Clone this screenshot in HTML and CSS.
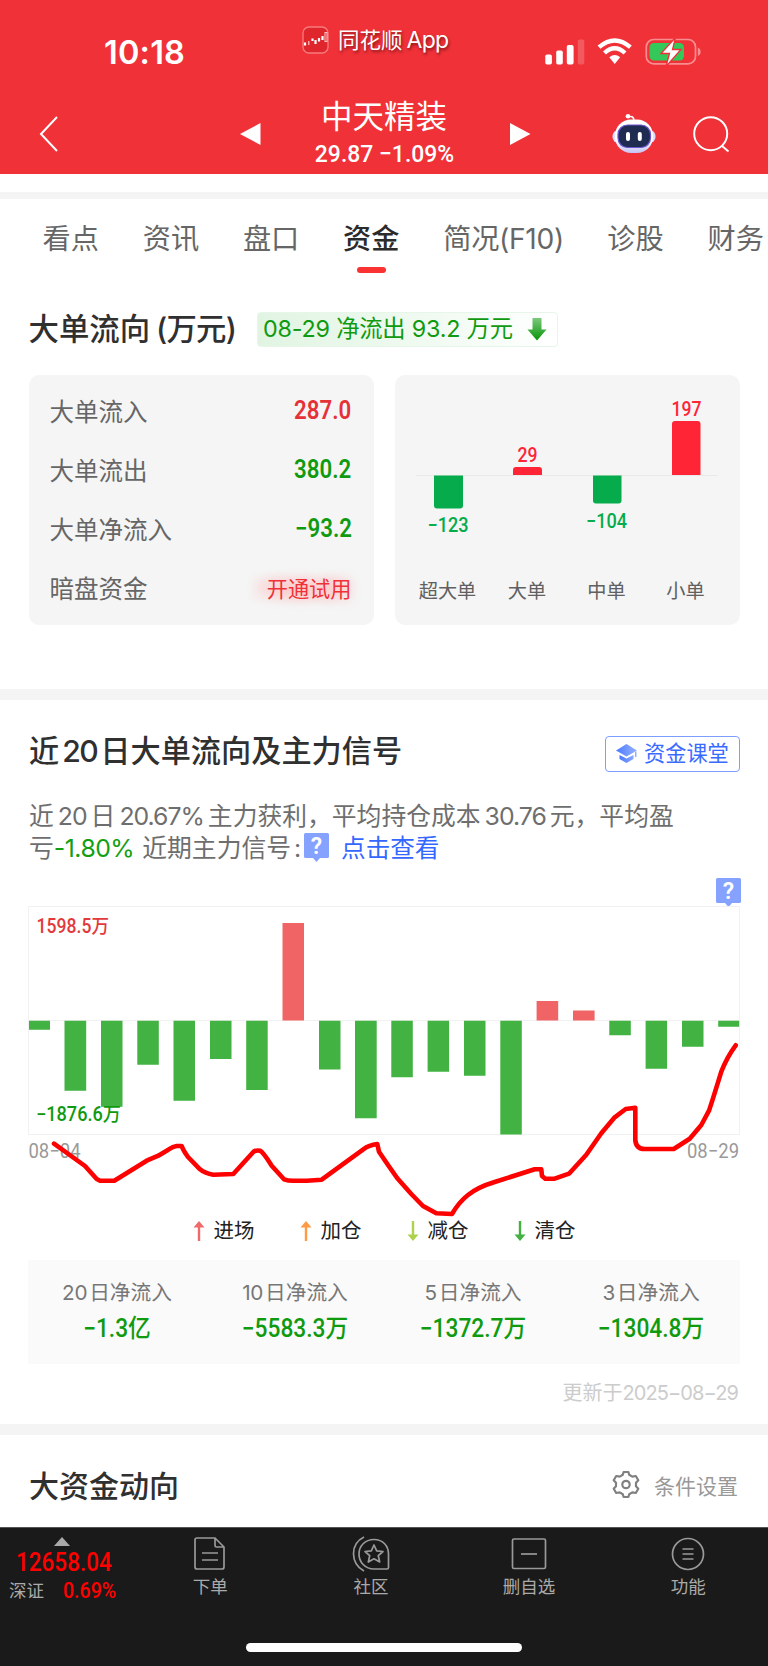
FILE: index.html
```html
<!DOCTYPE html>
<html lang="zh-CN">
<head>
<meta charset="utf-8">
<title>中天精装 资金</title>
<link rel="stylesheet" href="styles.css">
</head>
<body>
<div class="page">
<header class="top">
  <div class="status">
    <div class="time">10:18</div>
    <div class="app">
      <svg class="app-logo" width="27" height="28" viewBox="0 0 27 28"><rect x="1" y="1" width="25" height="26" rx="6" fill="#df262d" stroke="#f77b7e" stroke-width="1.3"/><g stroke="#fff" fill="none" stroke-width="2.200"><path d="M3 16.500v3M10.500 12.500v2.500M13.500 14v4M17 12v3.500M20.500 10v4"/><path d="M6.800 15v4" stroke="#ffc6c6" stroke-width="1.200"/><rect x="23" y="6.500" width="2" height="9" stroke="#ffc6c6" stroke-width="1"/></g></svg>
      <span class="app-name">同花顺<span class="latin">App</span></span>
    </div>
    <div class="sys">
      <svg width="160" height="28" viewBox="0 0 160 28">
        <g fill="#fff"><rect x="5.300" y="16.500" width="6.600" height="10" rx="1.800"/><rect x="16.200" y="12.500" width="6.600" height="14" rx="1.800"/><rect x="26.800" y="7" width="6.800" height="19.500" rx="1.800"/><rect x="37.800" y="1.500" width="6.500" height="25" rx="1.800" opacity=".2"/></g>
        <g fill="none" stroke="#fff" stroke-width="4.300"><path d="M59 9.200Q74.700-4.300 90.400 9.200"/><path d="M64.500 15Q74.700 5.500 85 15"/></g>
        <path d="M69.300 19.300Q74.700 14.800 80.200 19.300L74.700 26Z" fill="#fff"/>
        <rect x="106.300" y="1.500" width="49.200" height="24.400" rx="7.500" fill="none" stroke="#fff" stroke-opacity=".45" stroke-width="1.700"/>
        <path d="M157.800 9.500q2.800 1 2.800 4.200t-2.800 4.200z" fill="#fff" opacity=".45"/>
        <rect x="109.500" y="5" width="34.500" height="17.500" rx="4.500" fill="#34c759"/>
        <path d="M135.500-.5L121 15.500H129.500L126 28.500 141 11.500H132.500Z" fill="#fff" stroke="#f03138" stroke-width="1.300"/>
      </svg>
    </div>
  </div>
  <div class="nav">
    <svg class="back" width="20" height="38" viewBox="0 0 20 38"><path d="M18 2L2 19 18 36" fill="none" stroke="#fff" stroke-width="2"/></svg>
    <div class="stock">
      <svg width="21" height="22" viewBox="0 0 21 22"><path d="M0 11L20.500 0V22Z" fill="#fff"/></svg>
      <div class="stock-info"><div class="stock-name">中天精装</div><div class="stock-price din">29.87 −1.09%</div></div>
      <svg width="21" height="22" viewBox="0 0 21 22"><path d="M20.500 11L0 0V22Z" fill="#fff"/></svg>
    </div>
    <div class="nav-icons">
      <svg width="44" height="40" viewBox="0 0 44 40"><defs><linearGradient id="rb" x1="0" y1="0" x2="0" y2="1"><stop offset=".6" stop-color="#fff"/><stop offset="1" stop-color="#c5c2f4"/></linearGradient></defs><path d="M16 3Q22 1 22 7" fill="none" stroke="#fff" stroke-width="1.600"/><circle cx="16" cy="2.300" r="2.300" fill="#fff"/><rect x="0.500" y="16" width="43" height="13" rx="6" fill="#dcdcff"/><rect x="3" y="5.500" width="38" height="33.500" rx="16" fill="url(#rb)"/><rect x="6" y="11" width="32.500" height="22.500" rx="9.500" fill="#202b51" stroke="#6856cf" stroke-width="1.200"/><rect x="14" y="18" width="4" height="9" rx="2" fill="#fff"/><rect x="25.800" y="18" width="4" height="9" rx="2" fill="#fff"/></svg>
      <svg width="37" height="37" viewBox="0 0 37 37"><g fill="none" stroke="#fff" stroke-width="2"><circle cx="17.700" cy="17.700" r="16.500"/><path d="M28.500 29.500L35.500 35.500"/></g></svg>
    </div>
  </div>
</header>
<nav class="tabs">
  <span>看点</span><span>资讯</span><span>盘口</span><span class="on">资金</span><span class="wide">简况(F10)</span><span>诊股</span><span>财务</span>
</nav>

<section class="flow">
  <div class="flow-head">
    <h2>大单流向<span class="paren">(万元)</span></h2>
    <div class="net"><span class="net-text">08-29 净流出 93.2 万元</span>
      <svg width="20" height="23" viewBox="0 0 20 23"><defs><linearGradient id="ar" x1="0" y1="0" x2="0" y2="1"><stop stop-color="#7cc97c"/><stop offset="1" stop-color="#079407"/></linearGradient></defs><path d="M5.500 0H14.500V11.500H19.500L10 22.500 .5 11.500H5.500Z" fill="url(#ar)"/></svg>
    </div>
  </div>
  <div class="cards">
    <div class="card list">
      <div class="row"><span>大单流入</span><b class="din red">287.0</b></div>
      <div class="row"><span>大单流出</span><b class="din green">380.2</b></div>
      <div class="row"><span>大单净流入</span><b class="din green">−93.2</b></div>
      <div class="row"><span>暗盘资金</span><span class="trial">开通试用</span></div>
    </div>
    <div class="card">
      <svg class="mini" width="345" height="250" viewBox="0 0 345 250">
        <path d="M21 100.500H323" stroke="#e9e9e9"/>
        <g fill="#06ab4c"><path d="M39 100.500h29v30q0 3-3 3h-23q-3 0-3-3z"/><path d="M198 100.500h28.500v25q0 3-3 3h-22.500q-3 0-3-3z"/></g>
        <g fill="#ff2436"><path d="M118 100v-5q0-3 3-3h23q3 0 3 3v5z"/><path d="M277 100v-51q0-3 3-3h22.500q3 0 3 3v51z"/></g>
        <g class="mini-num" text-anchor="middle"><text x="53" y="157" fill="#06ab4c" textLength="41" lengthAdjust="spacingAndGlyphs">−123</text><text x="132.500" y="87" fill="#ff2436" textLength="20" lengthAdjust="spacingAndGlyphs">29</text><text x="211.500" y="152.500" fill="#06ab4c" textLength="41" lengthAdjust="spacingAndGlyphs">−104</text><text x="291.500" y="41" fill="#ff2436" textLength="30" lengthAdjust="spacingAndGlyphs">197</text></g>
        <g class="mini-cat" text-anchor="middle"><text x="52.500" y="223">超大单</text><text x="132" y="223">大单</text><text x="211.500" y="223">中单</text><text x="290.500" y="223">小单</text></g>
      </svg>
    </div>
  </div>
</section>

<section class="signal">
  <div class="sig-head">
    <h2>近<span class="num20">20</span>日大单流向及主力信号</h2>
    <div class="class-btn"><svg width="22" height="20" viewBox="0 0 22 20"><defs><linearGradient id="cap" x1="0" y1="0" x2="1" y2="0"><stop stop-color="#4a7aff"/><stop offset="1" stop-color="#98b2ff"/></linearGradient></defs><path d="M10.500 0L21 6.500 10.500 12.500 0 6.500Z" fill="url(#cap)"/><path d="M3.500 11L10.500 14.500 17.500 11V15L10.500 19 3.500 15ZM19 7.500h1.500V13H19z" fill="url(#cap)"/></svg><span>资金课堂</span></div>
  </div>
  <p class="desc"><span class="line l1">近<i class="n">20</i>日<i class="n pct">20.67%</i>主力获利，平均持仓成本<i class="n cost">30.76</i>元，平均盈</span><span class="line">亏<i class="n loss">-1.80%</i>近期主力信号<i class="colon">:</i><span class="help"><svg width="25" height="29" viewBox="0 0 25 29"><path d="M1.500 0h22q1.500 0 1.500 1.500v22q0 1.500-1.500 1.500H16l-3.500 4L9 25H1.500Q0 25 0 23.500v-22Q0 0 1.500 0z" fill="#86a2ff"/><text class="q" x="12.500" y="21" text-anchor="middle">?</text></svg></span><a>点击查看</a></span></p>
  <div class="help-row"><svg width="25" height="29" viewBox="0 0 25 29"><path d="M1.500 0h22q1.500 0 1.500 1.500v22q0 1.500-1.500 1.500H16l-3.500 4L9 25H1.500Q0 25 0 23.500v-22Q0 0 1.500 0z" fill="#86a2ff"/><text class="q" x="12.500" y="21" text-anchor="middle">?</text></svg></div>
  <svg class="chart" width="768" height="315" viewBox="0 906 768 315">
    <path d="M28.500 906.500H739.500V1134.500H28.500ZM28.500 1020.500H739.500" fill="none" stroke="#f1f1f1"/>
    <g fill="#42b342">
      <path d="M29 1020.700h21v9h-21zM64.500 1020.700h21.700v70h-21.700zM101 1020.700h21.500v86h-21.500zM137.300 1020.700h21.500v44h-21.500zM173.500 1020.700h21.500v80h-21.500zM210 1020.700h21.500v38.300h-21.500zM246.200 1020.700h21.500v69.300h-21.500zM319 1020.700h21.500v48.700h-21.500zM355 1020.700h21.700v97.500h-21.700zM391.300 1020.700h21.500v56.500h-21.500zM427.600 1020.700h21.500v51h-21.500zM464 1020.700h21.500v55h-21.500zM500.300 1020.700h21.500v113.700h-21.500zM609.300 1020.700h21.500v14.500h-21.500zM645.600 1020.700h21.500v48h-21.500zM682 1020.700h21.500v26h-21.500zM718.200 1020.700h21v6h-21z"/>
    </g>
    <g fill="#f06465"><path d="M282.500 923h21.500v97.500h-21.500zM536.600 1001h21.600v19.500h-21.600zM573 1010.500h21.600v10h-21.600z"/></g>
    <g class="axis"><text x="36.500" y="932.500" fill="#e2393c" textLength="72.500" lengthAdjust="spacingAndGlyphs">1598.5万</text><text x="36" y="1120.500" fill="#109a10" textLength="85" lengthAdjust="spacingAndGlyphs">−1876.6万</text></g>
    <g class="dates"><text x="28.500" y="1157.500" textLength="52" lengthAdjust="spacingAndGlyphs">08−04</text><text x="687" y="1157.500" textLength="52" lengthAdjust="spacingAndGlyphs">08−29</text></g>
    <path d="M54 1143.700L85 1166 96.700 1179 100 1180.700H114.300L146.700 1160.700 158.300 1155.700 168.300 1149.700Q173 1146.500 176.700 1146H181.700Q183 1150 188 1157L200 1169.300Q205 1173.500 213.300 1174.700L233.300 1174 254 1151.300Q257 1150 260 1150.700 263 1152 271.700 1165.700L284 1179.300Q288 1180.700 293.300 1180.700H306.700L321.700 1179.700 363.300 1149.300Q369 1145 377.300 1144L379 1151.700 388 1165 397.300 1178.300 411.300 1194 423 1206 436.300 1213.300 452 1214Q459 1202 468 1195 478 1187 494.700 1182L534.700 1169.300H541.300L542 1176 545.300 1178.700H554.700L569 1173.700 586.300 1154.700 601.300 1133.300 614.700 1117.300 625.700 1109 635.300 1107.700V1140Q636 1149 644.700 1149H673.700L689.700 1138.700 701.300 1125 709 1110.700Q712 1102 721.300 1071.700 727 1057 735.700 1045.300" fill="none" stroke="#fe0000" stroke-width="4.600" stroke-linejoin="round" stroke-linecap="round"/>
  </svg>
  <div class="legend">
    <span class="key"><svg width="12" height="20" viewBox="0 0 12 20"><path d="M4.800 20V6.500H.5L6 0l5.500 6.500H7.200V20z" fill="#ef6b6b"/></svg>进场</span>
    <span class="key"><svg width="12" height="20" viewBox="0 0 12 20"><path d="M4.800 20V6.500H.5L6 0l5.500 6.500H7.200V20z" fill="#ff9b45"/></svg>加仓</span>
    <span class="key"><svg width="12" height="20" viewBox="0 0 12 20"><path d="M4.800 0V13.500H.5L6 20l5.500-6.500H7.200V0z" fill="#add24d"/></svg>减仓</span>
    <span class="key"><svg width="12" height="20" viewBox="0 0 12 20"><path d="M4.800 0V13.500H.5L6 20l5.500-6.500H7.200V0z" fill="#42b342"/></svg>清仓</span>
  </div>
  <div class="stats">
    <div><span class="k"><i class="n">20</i>日净流入</span><b class="v">−1.3亿</b></div>
    <div><span class="k"><i class="n">10</i>日净流入</span><b class="v">−5583.3万</b></div>
    <div><span class="k"><i class="n">5</i>日净流入</span><b class="v">−1372.7万</b></div>
    <div><span class="k"><i class="n">3</i>日净流入</span><b class="v">−1304.8万</b></div>
  </div>
  <div class="updated">更新于<span class="upd-date">2025−08−29</span></div>
</section>

<section class="big">
  <h2>大资金动向</h2>
  <div class="setting"><svg width="28" height="28" viewBox="0 0 28 28"><g fill="none" stroke="#808080" stroke-width="2.200" stroke-linejoin="round"><path d="M11.600 1H16.400L17.200 3.800 20.300 5.600 23.800 5 26.300 9.300 24 11.800V15.200L26.300 17.700 23.800 22 20.300 21.400 17.200 23.200 16.400 26H11.600L10.800 23.200 7.700 21.400 4.200 22 1.700 17.700 4 15.200V11.800L1.700 9.300 4.200 5 7.700 5.600 10.800 3.800Z"/><circle cx="14" cy="13.500" r="3.700"/></g></svg><span>条件设置</span></div>
</section>

<footer class="bottom">
  <div class="bar">
    <div class="index"><svg class="tri" width="16" height="9" viewBox="0 0 16 9"><path d="M0 9L8 0l8 9z" fill="#aaa"/></svg><div class="pts din">12658.04</div><div class="sub"><span>深证</span><span class="chg din">0.69%</span></div></div>
    <div class="item"><svg width="34" height="36" viewBox="0 0 34 36"><g fill="none" stroke="#999" stroke-width="1.700"><path d="M22 2H4Q2 2 2 4V31Q2 33 4 33H29Q31 33 31 31V11ZM22 2V9.500Q22 11 23.500 11H31M9 17H25M9 24H25"/></g></svg><span>下单</span></div>
    <div class="item"><svg width="38" height="36" viewBox="0 0 38 36"><g fill="none" stroke="#999" stroke-width="1.700" stroke-linejoin="round"><path d="M12 1C-2 8-2 27 12 35M22 3.500C13 3.500 7 10 7 18S13 33 22 33H35Q36.500 33 36.500 31.500V18C36.500 10 31 3.500 22 3.500Z"/><path d="M22 9l2.700 5.800 6.300.7-4.700 4.200 1.400 6.300L22 22.800 16.300 26l1.400-6.300L13 15.500l6.300-.7z"/></g></svg><span>社区</span></div>
    <div class="item"><svg width="36" height="36" viewBox="0 0 36 36"><g fill="none" stroke="#999" stroke-width="1.700"><rect x="1.500" y="3" width="33" height="29.500" rx="1.500"/><path d="M10 18H26"/></g></svg><span>删自选</span></div>
    <div class="item"><svg width="34" height="36" viewBox="0 0 34 36"><g fill="none" stroke="#999" stroke-width="1.700"><circle cx="17" cy="18" r="15.500"/><path d="M11.500 13H22.500M11.500 18H22.500M11.500 23H22.500"/></g></svg><span>功能</span></div>
  </div>
  <div class="home"></div>
</footer>
</div>
</body>
</html>
```
FILE: styles.css
```css
* { box-sizing: border-box; }
body { margin: 0; background: #fff; }
svg { display: block; flex: none; overflow: visible; }
i { font-style: normal; }
h2 { margin: 0; font-size: 30.4px; line-height: 40px; font-weight: 500; color: #303030; white-space: nowrap; display: flex; }
.page { width: 768px; height: 1666px; overflow: hidden; display: flex; flex-direction: column; font-family: Inter, "Noto Sans CJK SC", sans-serif; color: #666; }
.din { font-family: Roboto, "Noto Sans CJK SC", sans-serif; }
.red { color: #e53238; }
.green { color: #109a10; }

.top { height: 174px; background: #f03138; color: #fff; }
.status { height: 100px; display: flex; align-items: flex-start; }
.time { width: 302px; padding: 32px 0 0 104px; font-size: 32.5px; line-height: 42px; font-weight: 600; letter-spacing: 0.2px; }
.app { width: 238px; padding-top: 26px; display: flex; align-items: center; gap: 9px; }
.app-name { font-size: 21.5px; line-height: 28px; display: flex; gap: 4px; text-shadow: 1px 2px 3px rgba(60, 0, 0, .6); }
.app-name .latin { font-size: 23px; letter-spacing: -0.7px; }
.sys { padding-top: 38px; }
.nav { height: 74px; display: flex; }
.back { margin: 15px 181px 0 39px; }
.stock { width: 291px; display: flex; justify-content: space-between; }
.stock > svg { margin-top: 23px; }
.stock-info { text-align: center; white-space: nowrap; margin-left: -3px; }
.stock-name { font-size: 31.5px; line-height: 36px; margin-top: -1px; }
.stock-price { font-size: 24.5px; line-height: 28px; font-weight: 500; margin-top: 5px; transform: scaleX(.935); }
.nav-icons { display: flex; gap: 37px; padding: 14px 0 0 81px; }
.nav-icons svg + svg { margin-top: 2px; }

.tabs { height: 98px; margin-top: 18px; border-top: 7px solid #f4f4f4; padding: 20px 0 0 42.5px; display: flex; gap: 44px; font-size: 28.2px; line-height: 40px; white-space: nowrap; overflow: hidden; }
.tabs span { flex: none; width: 56.2px; }
.tabs .wide { width: 120px; letter-spacing: -0.3px; }
.tabs .on { color: #2b2b2b; font-weight: 500; display: flex; flex-direction: column; align-items: center; }
.tabs .on::after { content: ""; width: 29px; height: 6px; border-radius: 3px; background: #fb3232; margin-top: 8px; }

.flow { height: 399px; padding: 18px 28px 0 28.5px; }
.flow-head { display: flex; align-items: center; height: 42px; }
.paren { margin-left: 6px; letter-spacing: -0.8px; }
.net { margin-left: 21px; width: 301px; height: 35px; border: 1px solid #e6f6e8; border-radius: 4px; background: linear-gradient(90deg, #e1f4e2, #f0faf1 55%, #fff); display: flex; align-items: center; color: #109a10; padding-left: 5px; }
.net-text { width: 251px; margin-right: 13px; font-size: 23.3px; line-height: 34px; white-space: nowrap; letter-spacing: -0.2px; }
.cards { display: flex; gap: 21px; margin-top: 25px; }
.card { width: 345px; height: 250px; background: #f5f5f5; border-radius: 10px; }
.list { padding: 6px 22px 0 21px; }
.row { height: 59px; display: flex; justify-content: space-between; align-items: center; font-size: 24.5px; white-space: nowrap; }
.row .din { font-size: 25px; font-weight: 600; transform: scaleX(.89); transform-origin: right; }
.trial { font-size: 21.2px; color: #f03138; text-shadow: 0 0 12px #ffa5a5, -14px 0 10px #ffc4c4; }
.mini-num { font: 500 20px Roboto, sans-serif; }
.mini-cat { font: 19.200px "Noto Sans CJK SC", sans-serif; fill: #606060; }

.signal { border-top: 11px solid #f4f4f4; height: 735px; }
.sig-head { padding: 31px 28px 0 29px; display: flex; justify-content: space-between; align-items: center; height: 77px; }
.sig-head h2 { margin-top: -6px; font-size: 30.2px; }
.num20 { margin: 0 3px; letter-spacing: -1.5px; }
.class-btn { width: 135px; height: 36px; border: 1.500px solid #7c9eff; border-radius: 4px; display: flex; align-items: center; gap: 6px; padding-left: 10px; font-size: 21.200px; color: #3a6bff; white-space: nowrap; }
.class-btn span { line-height: 32px; padding-bottom: 3px; }
.desc { margin: 23px 0 0; padding-left: 29px; font-size: 24.800px; line-height: 32px; color: #6e6e6e; }
.line { display: flex; white-space: nowrap; height: 32px; }
.desc .n { margin: 0 4px; letter-spacing: -1px; }
.desc .n.loss { color: #12a012; margin: 0 8px 0 0; letter-spacing: -0.5px; }
.colon { width: 13px; text-align: center; }
.help { padding-top: 1px; margin-right: 12px; }
.q { font: 600 23px Roboto, sans-serif; fill: #fff; }
.line a { color: #3467ff; font-size: 24.600px; }
.help-row { display: flex; justify-content: flex-end; height: 42px; padding: 14px 27px 0 0; }
.chart { margin: 0; }
.axis { font: 500 19.500px Roboto, "Noto Sans CJK SC", sans-serif; }
.dates { font: 20px Roboto, sans-serif; fill: #999; }
.legend { height: 39px; display: flex; justify-content: center; gap: 45px; padding: 0 0 19px; font-size: 20.500px; line-height: 20px; color: #222; }
.key { display: flex; align-items: center; gap: 9px; }
.stats { margin: 0 28px; height: 104px; background: #fafafa; display: grid; grid-template-columns: repeat(4, 1fr); padding-top: 17px; text-align: center; white-space: nowrap; }
.stats > div { display: flex; flex-direction: column; }
.k { font-size: 20.700px; line-height: 32px; color: #777; }
.k .n { margin-right: 2px; letter-spacing: -0.3px; }
.v { font: 500 25px/40px Roboto, "Noto Sans CJK SC", sans-serif; color: #109a10; transform: scaleX(.91); }
.updated { padding: 13px 30px 0; text-align: right; font-size: 20px; line-height: 32px; color: #ccc; }
.upd-date { letter-spacing: -0.9px; }

.big { height: 103px; border-top: 11px solid #f4f4f4; display: flex; justify-content: space-between; align-items: center; padding: 4px 30px 0 29px; }
.big h2 { font-size: 30px; padding-top: 5px; }
.setting { display: flex; align-items: center; gap: 14px; font-size: 21px; color: #999; padding-top: 3px; }
.bottom { height: 139px; background: #1a1a1a; border-top: 1.500px solid #555; }
.bar { height: 115px; display: flex; color: #aaa; font-size: 17.500px; }
.index { width: 128px; padding-top: 9px; display: flex; flex-direction: column; }
.tri { margin-left: 54px; }
.pts { color: #f00; font-size: 25px; line-height: 34px; font-weight: 500; padding-left: 16px; transform: scaleX(.9); transform-origin: 16px 0; }
.sub { display: flex; gap: 19px; padding-left: 9px; line-height: 22px; }
.chg { color: #f00; font-size: 21.5px; font-weight: 500; transform: scaleX(.91); transform-origin: left; }
.item { width: 160px; padding-top: 8px; display: flex; flex-direction: column; align-items: center; line-height: 26px; gap: 2px; }
.item:nth-child(2) { margin-left: 3px; }
.item:nth-child(3) { padding-left: 3px; }
.home { width: 276px; height: 9px; border-radius: 5px; background: #fff; margin: 0 auto; }
```
